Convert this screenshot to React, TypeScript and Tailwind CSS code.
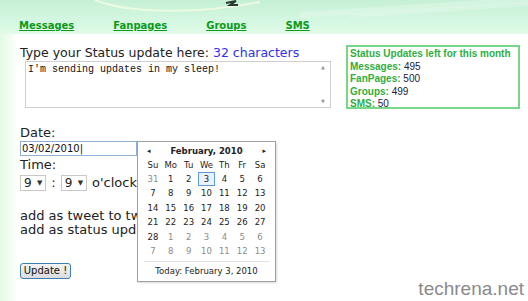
const navLinks = ["Messages", "Fanpages", "Groups", "SMS"];

const stats = [
  { label: "Messages:", value: "495" },
  { label: "FanPages:", value: "500" },
  { label: "Groups:", value: "499" },
  { label: "SMS:", value: "50" },
];

// February 2010 grid, muted = outside of month
const weeks: { d: number; muted?: boolean; today?: boolean }[][] = [
  [{ d: 31, muted: true }, { d: 1 }, { d: 2 }, { d: 3, today: true }, { d: 4 }, { d: 5 }, { d: 6 }],
  [{ d: 7 }, { d: 8 }, { d: 9 }, { d: 10 }, { d: 11 }, { d: 12 }, { d: 13 }],
  [{ d: 14 }, { d: 15 }, { d: 16 }, { d: 17 }, { d: 18 }, { d: 19 }, { d: 20 }],
  [{ d: 21 }, { d: 22 }, { d: 23 }, { d: 24 }, { d: 25 }, { d: 26 }, { d: 27 }],
  [{ d: 28 }, { d: 1, muted: true }, { d: 2, muted: true }, { d: 3, muted: true }, { d: 4, muted: true }, { d: 5, muted: true }, { d: 6, muted: true }],
  [{ d: 7, muted: true }, { d: 8, muted: true }, { d: 9, muted: true }, { d: 10, muted: true }, { d: 11, muted: true }, { d: 12, muted: true }, { d: 13, muted: true }],
];

function SelectBox({ value }: { value: string }) {
  return (
    <div className="flex items-center justify-between w-[32px] h-[16px] border border-[#c8c8c8] bg-white px-[3px] text-[12px] text-[#222]">
      <span>{value}</span>
      <span className="text-[7px] text-[#333]">▼</span>
    </div>
  );
}

function Calendar() {
  return (
    <div className="absolute left-[137px] top-[141px] w-[139px] h-[141px] bg-white border border-[#a0a0a0] shadow-[1px_1px_2px_rgba(0,0,0,0.15)] font-['DejaVu_Sans',sans-serif] text-[8.5px] text-[#222]">
      <div className="flex items-center justify-between px-[9px] pt-[3px] h-[15px]">
        <span className="text-[7px]">◂</span>
        <span className="font-bold text-[8.5px]">February, 2010</span>
        <span className="text-[7px]">▸</span>
      </div>
      <div className="grid grid-cols-7 px-[6px] mt-[1px] h-[14px] items-center text-center">
        {["Su", "Mo", "Tu", "We", "Th", "Fr", "Sa"].map((d) => (
          <span key={d}>{d}</span>
        ))}
      </div>
      <div className="px-[6px]">
        {weeks.map((w, i) => (
          <div key={i} className="grid grid-cols-7 h-[14.5px] items-center text-center">
            {w.map((c, j) => (
              <span
                key={j}
                className={
                  c.today
                    ? "mx-auto w-[17px] h-[14px] leading-[12px] border border-[#5a9ae0] bg-[#eaf3fd]"
                    : c.muted
                    ? "text-[#8a8a8a]"
                    : ""
                }
              >
                {c.d}
              </span>
            ))}
          </div>
        ))}
      </div>
      <div className="mx-[6px] mt-[2px] border-t border-[#e2e2e2] pt-[3px] text-center">
        Today: February 3, 2010
      </div>
    </div>
  );
}

export default function App() {
  return (
    <div className="relative w-[528px] h-[301px] overflow-hidden bg-[linear-gradient(to_right,#e2fbe2,#ffffff_18px)] font-['DejaVu_Sans',sans-serif]">
      {/* header band */}
      <div className="relative h-[34px] bg-[linear-gradient(to_bottom,#c6f0d6,#d6f8e2_70%,#e4fce9)] overflow-hidden">
        <svg className="absolute inset-0" width="528" height="34" viewBox="0 0 528 34">
          <path d="M95 0 C 130 14, 200 14, 260 2" stroke="#f4fbe6" strokeWidth="2" fill="none" opacity="0.8" />
          <path d="M226 3 l10 -2 l-6 4 l8 0" stroke="#2a3a30" strokeWidth="2" fill="none" />
          <path d="M300 15 L528 0" stroke="#e8fbef" strokeWidth="6" opacity="0.4" />
          <path d="M350 16 L528 4" stroke="#e8fbef" strokeWidth="4" opacity="0.4" />
        </svg>
        <nav className="relative flex gap-[39px] pl-[19px] pt-[19px]">
          {navLinks.map((l) => (
            <a key={l} className="text-[10px] font-bold text-[#0a9a1a] underline leading-[13px]">
              {l}
            </a>
          ))}
        </nav>
      </div>

      <div className="flex pl-[20px] pt-[11px]">
        {/* left form column */}
        <div className="w-[312px] text-[#222]">
          <div className="text-[12.5px] leading-[15px] whitespace-nowrap">
            Type your Status update here: <span className="text-[#3030f0]">32 characters</span>
          </div>
          <div className="ml-[5px] mt-[1px] w-[306px] h-[47px] flex border border-[#cfcfcf] bg-white">
            <div className="flex-1 px-[2px] pt-[2px] font-['Liberation_Mono',monospace] text-[10px] leading-[12px] text-[#111]">
              I'm sending updates in my sleep!
            </div>
            <div className="w-[14px] flex flex-col justify-between items-center py-[2px] text-[5px] text-[#9a9a9a]">
              <span>▲</span>
              <span>▼</span>
            </div>
          </div>
          <div className="mt-[17px] text-[13px] leading-[15px]">Date:</div>
          <div className="mt-[1px] w-[117px] h-[15px] border border-[#8fb1d6] bg-white px-[1px] text-[10px] leading-[13px] text-[#111]">
            03/02/2010|
          </div>
          <div className="mt-[1px] text-[13px] leading-[15px]">Time:</div>
          <div className="mt-[1px] w-[117px] overflow-hidden whitespace-nowrap flex items-center gap-[5px] text-[13px]">
            <SelectBox value="9" />
            <span>:</span>
            <SelectBox value="9" />
            <span>o'clock</span>
          </div>
          <div className="mt-[16px] w-[117px] overflow-hidden whitespace-nowrap text-[13px] leading-[14px]">
            <div>add as tweet to twitter</div>
            <div>add as status update</div>
          </div>
          <button className="mt-[26px] w-[51px] h-[16px] rounded-[3px] border border-[#3c7fb1] bg-[linear-gradient(to_bottom,#f4f4f4,#dcdcdc)] text-[10px] leading-[12px] text-[#111]">
            Update !
          </button>
        </div>

        {/* monthly allowance box */}
        <div className="ml-[14px] w-[174px] h-[64px] border-2 border-[#79d58a] px-[2px] pt-[1px] font-['Liberation_Sans',sans-serif] text-[10px] leading-[12.5px] font-bold text-[#2fae3e] whitespace-nowrap">
          <div>Status Updates left for this month</div>
          {stats.map((s) => (
            <div key={s.label}>
              {s.label} <span className="font-normal text-[#1a1a3a]">{s.value}</span>
            </div>
          ))}
        </div>
      </div>

      <Calendar />

      <div className="absolute right-[4px] bottom-[1px] font-['Liberation_Sans',sans-serif] text-[19px] leading-[22px] text-[#8a8a8a]">
        techrena.net
      </div>
    </div>
  );
}
